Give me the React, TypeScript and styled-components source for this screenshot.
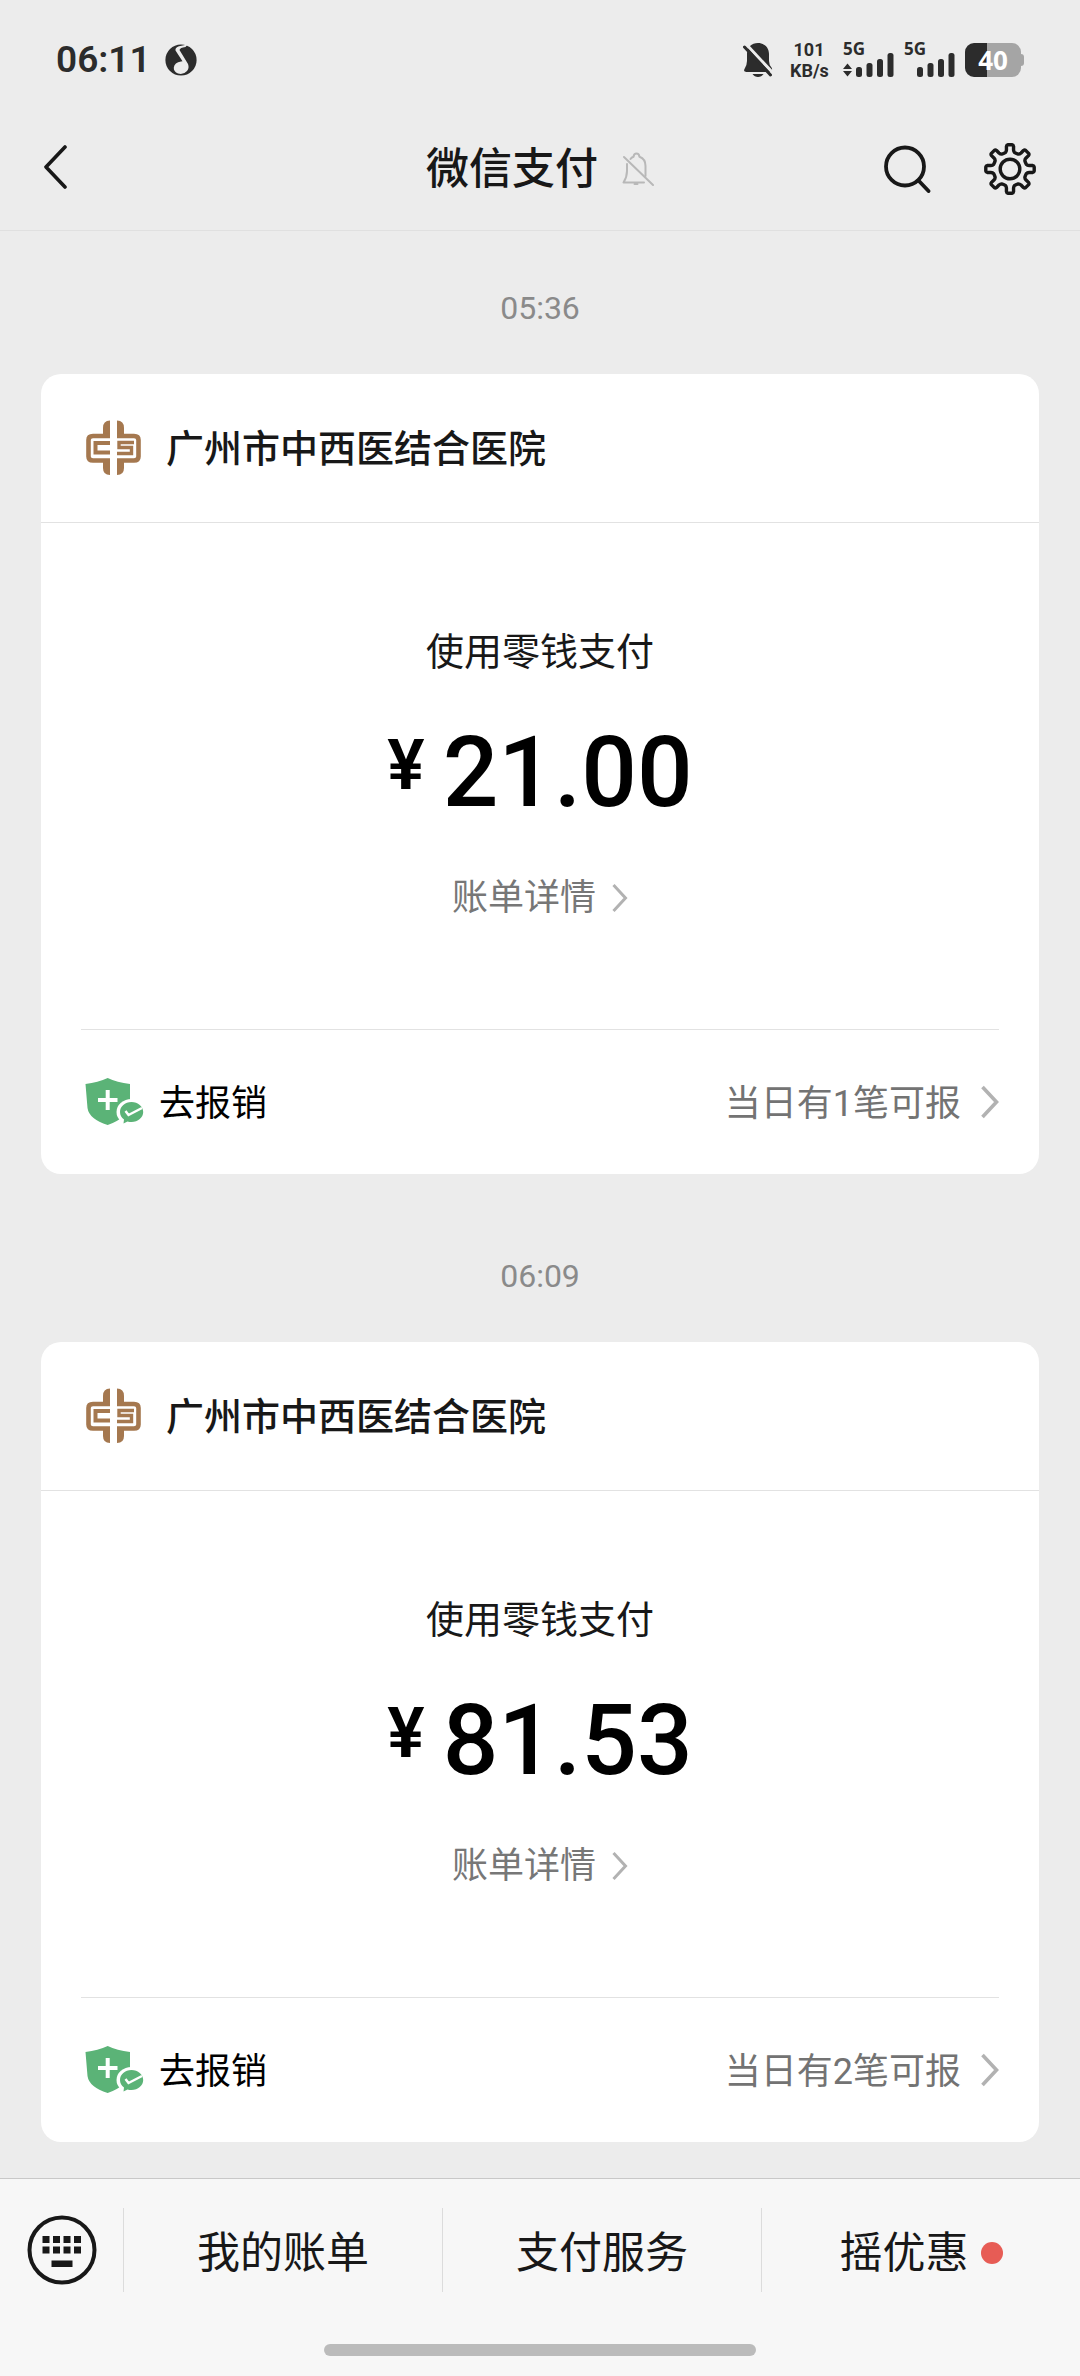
import React from "react";
import styled, { createGlobalStyle } from "styled-components";

const GlobalStyle = createGlobalStyle`
  *, *::before, *::after { box-sizing: border-box; }
  body {
    margin: 0;
    background: #ececec;
    color: #181818;
    font-family: Roboto, "Noto Sans CJK SC", sans-serif;
    -webkit-font-smoothing: antialiased;
  }
  h1, h2, p { margin: 0; }
  a { color: inherit; text-decoration: none; }
  button {
    margin: 0;
    padding: 0;
    border: 0;
    background: none;
    color: inherit;
    font: inherit;
    cursor: pointer;
  }
  svg { display: block; flex: none; }
`;

const Page = styled.div`
  display: flex;
  flex-direction: column;
  min-height: 100vh;
`;

/* ---------- status bar ---------- */

const StatusBar = styled.div`
  display: flex;
  align-items: center;
  justify-content: space-between;
  height: 106px;
  padding: 14px 56px 0 56px;
  color: #2c2c2c;
`;

const StatusGroup = styled.div<{ $gap: number }>`
  display: flex;
  align-items: center;
  gap: ${(p) => p.$gap}px;
`;

const Clock = styled.time`
  font-size: 37px;
  line-height: 40px;
  font-weight: 600;
`;

const NetSpeed = styled.div`
  width: 38px;
  margin: 0 6px 0 8px;
  font-size: 18px;
  line-height: 21px;
  font-weight: 700;
  text-align: center;
  white-space: nowrap;
`;

const SignalBox = styled.div`
  position: relative;
  width: 52px;
  height: 34px;
`;

const SignalLabel = styled.span`
  position: absolute;
  top: 0;
  left: 0;
  font-family: "Open Sans", sans-serif;
  font-size: 17px;
  line-height: 12px;
  font-weight: 700;
`;

const Battery = styled.div`
  display: flex;
  align-items: center;
`;

const BatteryBody = styled.div<{ $level: number }>`
  width: 56px;
  height: 34px;
  border-radius: 9px;
  background: linear-gradient(
    to right,
    #2c2c2c ${(p) => p.$level}%,
    #a5a5a5 ${(p) => p.$level}%
  );
  color: #ffffff;
  font-family: "Open Sans", sans-serif;
  font-size: 26px;
  line-height: 34px;
  font-weight: 700;
  text-align: center;
`;

const BatteryTip = styled.div`
  width: 3px;
  height: 12px;
  border-radius: 0 3px 3px 0;
  background: #a5a5a5;
`;

/* ---------- title bar ---------- */

const TitleBar = styled.header`
  display: grid;
  grid-template-columns: 1fr auto 1fr;
  align-items: center;
  height: 125px;
  padding: 2px 44px 0;
  border-bottom: 1px solid #e0e0e0;
`;

const TitleGroup = styled.div`
  display: flex;
  align-items: center;
  gap: 24px;
`;

const Title = styled.h1`
  font-size: 43px;
  line-height: 60px;
  font-weight: 500;
`;

const Actions = styled.div`
  display: flex;
  align-items: center;
  justify-content: flex-end;
  gap: 52px;
`;

/* ---------- conversation ---------- */

const Chat = styled.main`
  flex: 1;
  display: flex;
  flex-direction: column;
  gap: 82px;
  padding: 57px 41px 36px;
`;

const Message = styled.section`
  display: flex;
  flex-direction: column;
  gap: 46px;
`;

const SentAt = styled.time`
  font-size: 32px;
  line-height: 40px;
  text-align: center;
  color: #8a8a8a;
`;

const Card = styled.article`
  border-radius: 20px;
  background: #ffffff;
`;

const CardHeader = styled.div`
  display: flex;
  align-items: center;
  gap: 25px;
  height: 149px;
  padding: 0 44px;
  border-bottom: 1px solid #e2e2e2;
`;

const Merchant = styled.h2`
  padding-top: 2px;
  font-size: 38px;
  line-height: 56px;
  font-weight: 500;
`;

const CardBody = styled.div`
  display: flex;
  flex-direction: column;
  align-items: center;
  margin: 0 40px;
  padding: 101px 0 106px;
  border-bottom: 1px solid #e2e2e2;
`;

const Method = styled.p`
  font-size: 38px;
  line-height: 56px;
`;

const Amount = styled.p`
  display: flex;
  align-items: flex-start;
  gap: 18px;
  margin: 33px 0 40px;
  color: #000000;
  font-size: 98px;
  line-height: 120px;
  font-weight: 500;
`;

const Currency = styled.span`
  font-size: 70px;
  line-height: 104px;
  font-weight: 600;
`;

const Detail = styled.a`
  display: flex;
  align-items: center;
  gap: 16px;
  color: #777777;
  font-size: 36px;
  line-height: 50px;
`;

const CardFooter = styled.a`
  display: flex;
  align-items: center;
  height: 144px;
  padding: 0 40px 0 44px;
  color: #000000;
  font-size: 36px;
  line-height: 50px;
`;

const Claim = styled.span`
  margin-left: 14px;
  padding-top: 4px;
`;

const ClaimCount = styled.span`
  margin-left: auto;
  margin-right: 20px;
  padding-top: 4px;
  color: #737373;
`;

/* ---------- bottom menu ---------- */

const BottomBar = styled.footer`
  border-top: 1px solid #c8c8c8;
  background: #f7f7f7;
`;

const Menu = styled.nav`
  display: flex;
  align-items: center;
  height: 142px;
`;

const KeyboardButton = styled.button`
  display: flex;
  align-items: center;
  justify-content: center;
  width: 123px;
  height: 84px;
`;

const MenuItem = styled.button`
  flex: 1;
  display: flex;
  align-items: center;
  justify-content: center;
  gap: 12px;
  height: 84px;
  padding-top: 6px;
  border-left: 1px solid #dcdcdc;
  font-size: 43px;
  line-height: 60px;
`;

const Dot = styled.span`
  width: 22px;
  height: 22px;
  border-radius: 50%;
  background: #e75c55;
`;

const HomeIndicator = styled.div`
  width: 40%;
  height: 12px;
  margin: 23px auto 20px;
  border-radius: 6px;
  background: #bbbbbb;
`;

/* ---------- icons ---------- */

const MusicIcon = () => (
  <svg width="32" height="32" viewBox="0 0 32 32" aria-hidden="true">
    <circle cx="16" cy="16" r="15.6" fill="#2c2c2c" />
    <path
      d="M23 0 L20.5 3 Q15 3.5 14.5 6 L23 20 Q24.5 24 22 27 Q18.500 31 13 29.500 Q8.500 27.500 8.800 23.500 Q9.500 18.500 16 17.500 L17.500 17.200 L10.500 6.500 Q10 3.500 14 2.300 L20 1 Z"
      fill="#ececec"
    />
  </svg>
);

const MutedIcon = () => (
  <svg width="30" height="36" viewBox="0 0 30 36" aria-hidden="true">
    <path
      d="M15 1 C21.500 1 26 5.500 26 12 V19 Q26 23 28.800 26 Q30 30 26.500 30 H3.500 Q0 30 1.500 27 Q4 23 4 19 V12 C4 5.500 8.500 1 15 1 Z M9.500 32 H20.500 Q18.500 35 15 35 Q11.500 35 9.500 32 Z"
      fill="#2c2c2c"
    />
    <path d="M3 2 L30 31" stroke="#ececec" strokeWidth="3" />
    <path d="M1.500 5 L27.500 33" stroke="#2c2c2c" strokeWidth="3" strokeLinecap="round" />
  </svg>
);

const Signal = ({ transfer }: { transfer?: boolean }) => (
  <SignalBox>
    <svg width="52" height="34" viewBox="0 0 52 34" fill="#2c2c2c" aria-hidden="true">
      {transfer && <path d="M4.500 20.500 L9 26 H0 Z M4.500 33.500 L0 28 H9 Z" />}
      <rect x="13" y="24" width="6" height="10" rx="2.500" />
      <rect x="23.500" y="20" width="6" height="14" rx="2.500" />
      <rect x="34" y="16" width="6" height="18" rx="2.500" />
      <rect x="44.500" y="10" width="6" height="24" rx="2.500" />
    </svg>
    <SignalLabel>5G</SignalLabel>
  </SignalBox>
);

const BackIcon = () => (
  <svg width="24" height="46" viewBox="0 0 24 46" fill="none" aria-hidden="true">
    <path d="M21 3 L2 23 L21 43" stroke="#181818" strokeWidth="3.600" strokeLinecap="round" strokeLinejoin="round" />
  </svg>
);

const BellOffIcon = () => (
  <svg
    width="32"
    height="34"
    viewBox="0 0 32 34"
    fill="none"
    stroke="#b8b8b8"
    strokeWidth="2"
    strokeLinecap="round"
    strokeLinejoin="round"
    aria-hidden="true"
  >
    <path d="M2 5 L31 33" />
    <path d="M8.500 7 Q9.500 5.500 11.500 4.800 Q12 1.500 14.500 1.500 Q17 1.500 17.500 4.800 Q23.500 7 23.500 14 V24" />
    <path d="M5 12 V19 Q5 25 1.500 30.500 H22" />
    <path d="M12.500 32 H15.500" />
  </svg>
);

const SearchIcon = () => (
  <svg width="48" height="48" viewBox="0 0 48 48" fill="none" stroke="#181818" strokeWidth="3.800" aria-hidden="true">
    <circle cx="21" cy="21.500" r="19" />
    <path d="M34.500 35.500 L44.500 46" strokeLinecap="round" />
  </svg>
);

const gearPath = (() => {
  const at = (radius: number, degrees: number) => {
    const a = (degrees * Math.PI) / 180;
    return `${(26 + radius * Math.sin(a)).toFixed(2)} ${(26 - radius * Math.cos(a)).toFixed(2)}`;
  };
  let d = "";
  for (let i = 0; i < 8; i++) {
    const c = i * 45;
    d += `${i ? "L" : "M"}${at(17, c - 16)} Q${at(17.6, c - 12)} ${at(19.5, c - 10.5)} `;
    d += `L${at(22.8, c - 9)} Q${at(24.3, c - 8)} ${at(24.3, c - 5)} `;
    d += `L${at(24.3, c + 5)} Q${at(24.3, c + 8)} ${at(22.8, c + 9)} `;
    d += `L${at(19.5, c + 10.5)} Q${at(17.6, c + 12)} ${at(17, c + 16)} `;
    d += `Q${at(16.6, c + 22.5)} ${at(17, c + 29)} `;
  }
  return d + "Z";
})();

const GearIcon = () => (
  <svg
    width="52"
    height="52"
    viewBox="0 0 52 52"
    fill="none"
    stroke="#181818"
    strokeWidth="3.400"
    strokeLinejoin="round"
    aria-hidden="true"
  >
    <path d={gearPath} />
    <circle cx="26" cy="26" r="9.800" />
  </svg>
);

const HospitalLogo = () => (
  <svg width="56" height="56" viewBox="6 6 56 56" fill="none" stroke="#a5784f" aria-hidden="true">
    <path d="M24 22 V14 Q24 6.500 31 6.500 V22 Z M24 46 V54 Q24 61 31 61 V46 Z" fill="#a5784f" stroke="none" />
    <path d="M45 22 V14 Q45 6.500 38 6.500 V22 Z M45 46 V54 Q45 61 38 61 V46 Z" fill="#a5784f" stroke="none" />
    <path d="M31 22 H14 Q9.500 22 9.500 26 V42.500 Q9.500 46.500 14 46.500 H31" strokeWidth="4.600" />
    <path d="M38 22 H55 Q59.500 22 59.500 26 V42.500 Q59.500 46.500 55 46.500 H38" strokeWidth="4.600" />
    <path d="M31 29 H16.500 V38.500 H31" strokeWidth="4" />
    <path d="M55 28.500 H40 V33.500 H52.500 V39.500 H38" strokeWidth="3.400" />
  </svg>
);

const ShieldIcon = () => (
  <svg width="60" height="50" viewBox="0 0 60 50" fill="none" aria-hidden="true">
    <path
      d="M22.700 1 Q32 5.500 45 7 V26 Q43 41 22.700 48 Q4 42 2.500 31 L0.500 7 Q13 5.500 22.700 1 Z"
      fill="#5bb377"
    />
    <path d="M22.700 13 V33 M13 23 H32.500" stroke="#ffffff" strokeWidth="4" />
    <ellipse cx="46.500" cy="35" rx="15" ry="13" fill="#ffffff" />
    <path
      d="M46.500 25 C53 25 58.200 29.500 58.200 35 C58.200 40.500 53 45 46.500 45 Q44.500 45 42.500 44.500 L38.500 46.500 L39 42.500 C36.500 40.500 35 38 35 35 C35 29.500 40 25 46.500 25 Z"
      fill="#5bb377"
    />
    <path d="M40.500 34 L43.500 38 L57 31" stroke="#ffffff" strokeWidth="2.400" />
  </svg>
);

const ChevronIcon = ({ large }: { large?: boolean }) => (
  <svg
    width={large ? 18 : 16}
    height={large ? 34 : 30}
    viewBox={large ? "0 0 18 34" : "0 0 16 30"}
    fill="none"
    stroke="#b2b2b2"
    strokeWidth={large ? 3.6 : 3}
    aria-hidden="true"
  >
    <path d={large ? "M1.500 2 L15.500 17 L1.500 32" : "M1.500 2 L13.500 15 L1.500 28"} />
  </svg>
);

const keyColumns = [15.5, 26, 36.500, 47];

const KeyboardIcon = () => (
  <svg width="70" height="70" viewBox="0 0 70 70" fill="#181818" aria-hidden="true">
    <circle cx="35" cy="35" r="32.500" fill="none" stroke="#181818" strokeWidth="4" />
    {keyColumns.map((x) => (
      <React.Fragment key={x}>
        <rect x={x} y="21" width="7" height="7" />
        <rect x={x} y="31.500" width="7" height="7" />
      </React.Fragment>
    ))}
    <rect x="24.500" y="45.500" width="21" height="6.500" />
  </svg>
);

/* ---------- screen ---------- */

const payments = [
  { time: "05:36", merchant: "广州市中西医结合医院", amount: "21.00", claims: 1 },
  { time: "06:09", merchant: "广州市中西医结合医院", amount: "81.53", claims: 2 },
];

export default function App() {
  return (
    <Page>
      <GlobalStyle />
      <StatusBar>
        <StatusGroup $gap={14}>
          <Clock>06:11</Clock>
          <MusicIcon />
        </StatusGroup>
        <StatusGroup $gap={9}>
          <MutedIcon />
          <NetSpeed>
            101
            <br />
            KB/s
          </NetSpeed>
          <StatusGroup $gap={9}>
            <Signal transfer />
            <Signal />
          </StatusGroup>
          <Battery>
            <BatteryBody $level={40}>40</BatteryBody>
            <BatteryTip />
          </Battery>
        </StatusGroup>
      </StatusBar>

      <TitleBar>
        <div>
          <button type="button" aria-label="返回">
            <BackIcon />
          </button>
        </div>
        <TitleGroup>
          <Title>微信支付</Title>
          <BellOffIcon />
        </TitleGroup>
        <Actions>
          <button type="button" aria-label="搜索">
            <SearchIcon />
          </button>
          <button type="button" aria-label="设置">
            <GearIcon />
          </button>
        </Actions>
      </TitleBar>

      <Chat>
        {payments.map((p) => (
          <Message key={p.time}>
            <SentAt>{p.time}</SentAt>
            <Card>
              <CardHeader>
                <HospitalLogo />
                <Merchant>{p.merchant}</Merchant>
              </CardHeader>
              <CardBody>
                <Method>使用零钱支付</Method>
                <Amount>
                  <Currency>¥</Currency>
                  <span>{p.amount}</span>
                </Amount>
                <Detail href="#detail">
                  账单详情
                  <ChevronIcon />
                </Detail>
              </CardBody>
              <CardFooter href="#claim">
                <ShieldIcon />
                <Claim>去报销</Claim>
                <ClaimCount>当日有{p.claims}笔可报</ClaimCount>
                <ChevronIcon large />
              </CardFooter>
            </Card>
          </Message>
        ))}
      </Chat>

      <BottomBar>
        <Menu>
          <KeyboardButton type="button" aria-label="键盘">
            <KeyboardIcon />
          </KeyboardButton>
          <MenuItem type="button">我的账单</MenuItem>
          <MenuItem type="button">支付服务</MenuItem>
          <MenuItem type="button">
            摇优惠
            <Dot />
          </MenuItem>
        </Menu>
        <HomeIndicator />
      </BottomBar>
    </Page>
  );
}
